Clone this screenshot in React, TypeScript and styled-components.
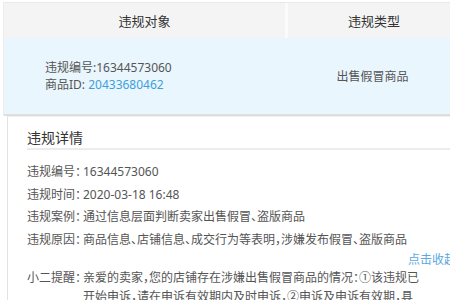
import React from 'react'
import styled, { createGlobalStyle } from 'styled-components'

const GlobalStyle = createGlobalStyle`
  html, body {
    margin: 0;
    padding: 0;
    background: #fff;
  }
  body {
    font-family: "Noto Sans", "Noto Sans CJK SC", sans-serif;
    font-size: 12px;
    color: #555;
  }
`

const Page = styled.div`
  width: 450px;
  height: 300px;
  overflow: hidden;
  padding: 2px 0 0 3px;
  box-sizing: border-box;
`

const ViolationTable = styled.div`
  display: grid;
  grid-template-columns: 281px 175px;
  width: 456px;
  border-top: 1px solid #e9e9e9;
  border-left: 1px solid #ececec;
`

const HeaderCell = styled.div<{ $divider?: boolean }>`
  height: 35px;
  display: flex;
  align-items: center;
  justify-content: center;
  background: #f4f4f4;
  color: #333;
  font-size: 13px;
  box-sizing: border-box;
  border-left: ${(p) => (p.$divider ? '3px solid #fbfbfb' : 'none')};
`

const BodyCell = styled.div<{ $center?: boolean }>`
  height: 76px;
  display: flex;
  flex-direction: column;
  justify-content: center;
  align-items: ${(p) => (p.$center ? 'center' : 'flex-start')};
  padding-left: ${(p) => (p.$center ? '0' : '41px')};
  background: #eaf6fd;
  border-bottom: 2px solid #dedede;
  line-height: 17px;
  color: #555;
`

const IdLink = styled.span`
  color: #3f9fdc;
`

const DetailPanel = styled.div`
  width: 460px;
  margin-left: 4px;
  padding: 0 11px 0 19px;
  border-left: 1px solid #e3e3e3;
  border-top: 1px solid #eeeeee;
  box-sizing: border-box;
`

const PanelTitle = styled.div`
  padding-top: 11px;
  line-height: 20px;
  font-size: 14px;
  color: #333;
  border-bottom: 2px solid #ececec;
  margin-bottom: 11px;
`

const InfoLine = styled.div`
  display: flex;
  line-height: 22.5px;
  color: #555;
  white-space: nowrap;
  font-feature-settings: 'halt';
`

const FieldLabel = styled.span`
  flex: none;
  width: 56px;
`

const CollapseRow = styled.div`
  display: flex;
  justify-content: flex-end;
  line-height: 17px;
`

const CollapseLink = styled.span`
  color: #5aa8e0;
`

const ReminderRow = styled.div`
  display: flex;
  line-height: 19px;
  color: #555;
  font-feature-settings: 'halt';
`

const ReminderText = styled.span`
  width: 336px;
`

const fields: [string, string][] = [
  ['违规编号', '16344573060'],
  ['违规时间', '2020-03-18 16:48'],
  ['违规案例', '通过信息层面判断卖家出售假冒、盗版商品'],
  ['违规原因', '商品信息、店铺信息、成交行为等表明，涉嫌发布假冒、盗版商品'],
]

export default function App() {
  return (
    <Page>
      <GlobalStyle />
      <ViolationTable>
        <HeaderCell>违规对象</HeaderCell>
        <HeaderCell $divider>违规类型</HeaderCell>
        <BodyCell>
          <span>违规编号:16344573060</span>
          <span>
            商品ID: <IdLink>20433680462</IdLink>
          </span>
        </BodyCell>
        <BodyCell $center>出售假冒商品</BodyCell>
      </ViolationTable>
      <DetailPanel>
        <PanelTitle>违规详情</PanelTitle>
        {fields.map(([label, value]) => (
          <InfoLine key={label}>
            <FieldLabel>{label}：</FieldLabel>
            <span>{value}</span>
          </InfoLine>
        ))}
        <CollapseRow>
          <CollapseLink>点击收起</CollapseLink>
        </CollapseRow>
        <ReminderRow>
          <FieldLabel>小二提醒：</FieldLabel>
          <ReminderText>
            亲爱的卖家，您的店铺存在涉嫌出售假冒商品的情况：①该违规已开始申诉，请在申诉有效期内及时申诉，②申诉及申诉有效期，具体请查看规则说明。
          </ReminderText>
        </ReminderRow>
      </DetailPanel>
    </Page>
  )
}
